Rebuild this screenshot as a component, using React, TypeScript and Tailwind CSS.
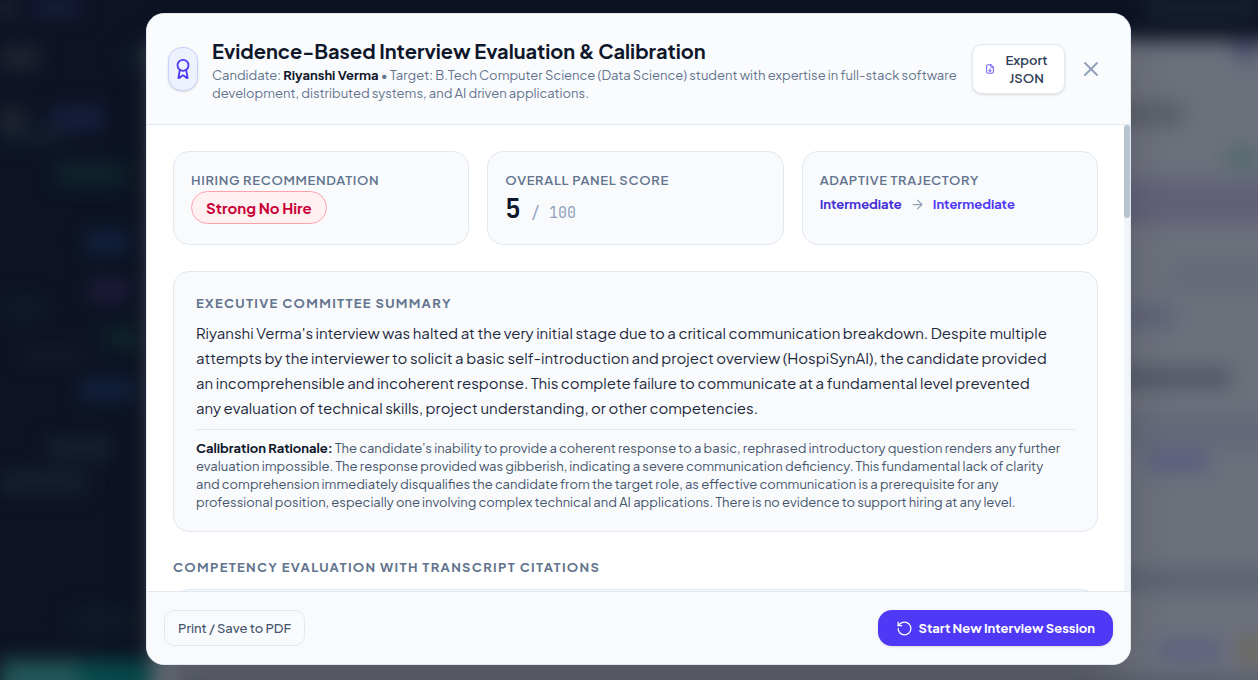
import React from 'react';
import { ArrowRight, Award, FileDown, RotateCcw, X } from 'lucide-react';

const StatCard: React.FC<{ label: string; children: React.ReactNode }> = ({ label, children }) => (
  <div className="min-h-[94px] rounded-2xl border border-slate-200 bg-slate-50 p-[17px]">
    <div className="text-[13px] font-semibold uppercase leading-[22px] tracking-wider text-slate-500">{label}</div>
    {children}
  </div>
);

// The page behind the dialog, seen through the blurred overlay
const Backdrop: React.FC = () => (
  <div aria-hidden="true" className="absolute inset-0 overflow-hidden bg-[#0d1323]">
    <div className="flex h-full flex-col blur-[10px]">
      <div className="flex h-10 shrink-0 justify-between">
        <div className="flex h-4 gap-5">
          <div className="w-3 bg-[#2c3140]" />
          <div className="w-12 bg-[#1a1f42]" />
        </div>
        <div className="h-4 w-28 bg-[#1b2435]" />
      </div>
      <div className="flex flex-1">
        <div className="flex w-[152px] shrink-0 flex-col">
          <div className="mt-2 flex h-5 justify-between">
            <div className="w-10 bg-[#232734]" />
            <div className="mr-2 w-5 bg-[#16202f]" />
          </div>
          <div className="mt-10 flex h-5">
            <div className="w-6 bg-[#262934]" />
            <div className="ml-7 w-[52px] bg-[#1a2044]" />
          </div>
          <div className="h-4 w-16 bg-[#141f2e]" />
          <div className="ml-14 mt-5 h-5 w-[72px] bg-[#0f272e]" />
          <div className="ml-[86px] mt-12 h-5 w-11 bg-[#122442]" />
          <div className="ml-[90px] mt-7 h-5 w-10 bg-[#221d3f]" />
          <div className="h-4 w-11 bg-[#131e2c]" />
          <div className="ml-[106px] mt-3 h-5 w-8 bg-[#0f2b2f]" />
          <div className="ml-5 h-3 w-16 bg-[#171c2e]" />
          <div className="ml-20 mt-5 h-5 w-14 bg-[#132442]" />
          <div className="ml-12 mt-10 h-4 w-16 bg-[#1b2533]" />
          <div className="mt-4 h-5 w-[86px] bg-[#182130]" />
          <div className="ml-[70px] mt-[120px] h-4 w-16 bg-[#131e2c]" />
          <div className="-mb-6 mt-auto flex h-11">
            <div className="w-20 bg-[#22575a]" />
            <div className="flex-1 bg-[#084a4d]" />
          </div>
        </div>
        <div className="-mb-6 -mr-6 flex flex-1 flex-col items-end bg-[#6c707b] pr-6">
          <div className="h-5 w-6 bg-[#4f5072]" />
          <div className="mr-[74px] mt-11 h-5 w-16 bg-[#575b65]" />
          <div className="mt-6 h-5 w-8 bg-[#4f696b]" />
          <div className="-mr-6 mt-3 h-11 w-44 bg-[#606079]" />
          <div className="-mr-6 mt-9 h-8 w-28 bg-[#646b77]" />
          <div className="mr-[84px] mt-4 h-4 w-14 bg-[#5a5d76]" />
          <div className="mr-7 mt-11 h-5 w-28 bg-[#515664]" />
          <div className="-mr-6 mt-7 h-8 w-44 bg-[#646879]" />
          <div className="mr-12 mt-1 h-5 w-16 bg-[#595d7f]" />
          <div className="-mr-6 mt-24 h-6 w-44 bg-[#5b6370]" />
          <div className="mt-12 flex h-5 gap-5">
            <div className="w-16 bg-[#5c6080]" />
            <div className="w-4 bg-[#6b6248]" />
          </div>
          <div className="-mr-6 mt-4 w-full flex-1 bg-[#565b68]" />
        </div>
      </div>
    </div>
  </div>
);

const App: React.FC = () => {
  return (
    <div className="relative h-screen overflow-hidden font-['Plus_Jakarta_Sans','Inter',sans-serif] antialiased">
      <Backdrop />

      <div className="relative flex h-full justify-center pb-[15px] pl-[19px] pt-[13px]">
        <div
          role="dialog"
          aria-modal="true"
          aria-labelledby="evaluation-title"
          className="flex w-full max-w-[985px] flex-col overflow-hidden rounded-[18px] border border-slate-200 bg-white shadow-2xl"
        >
          <header className="flex shrink-0 items-center border-b border-slate-200 bg-[#fafbfd] px-[21px] py-[22px]">
            <div className="flex h-11 w-[30px] shrink-0 items-center justify-center rounded-[14px] border border-indigo-200 bg-indigo-50 text-indigo-600 shadow-sm">
              <Award size={22} className="shrink-0" />
            </div>
            <div className="ml-[14px] min-w-0 flex-1">
              <h1 id="evaluation-title" className="text-[20px] font-bold leading-[30px] text-slate-900">
                Evidence-Based Interview Evaluation &amp; Calibration
              </h1>
              <p className="text-[13px] leading-[18px] text-slate-500">
                Candidate: <strong className="font-bold text-slate-900">Riyanshi Verma</strong> • Target: B.Tech
                Computer Science (Data Science) student with expertise in full-stack software development, distributed
                systems, and AI driven applications.
              </p>
            </div>
            <button className="flex w-[93px] shrink-0 items-center gap-[6px] rounded-[10px] border border-slate-200 bg-white px-3 py-[6px] text-[13px] font-semibold leading-[18px] text-slate-700 shadow-sm">
              <FileDown size={10} className="shrink-0 text-indigo-600" />
              <span className="flex-1 text-center">Export JSON</span>
            </button>
            <button aria-label="Close" className="ml-2 flex size-9 shrink-0 items-center justify-center text-slate-400">
              <X size={24} />
            </button>
          </header>

          <div className="flex min-h-0 flex-1">
            <div className="flex-1 overflow-y-auto p-[26px] [scrollbar-width:none]">
              <div className="grid grid-cols-3 gap-[18px]">
                <StatCard label="Hiring Recommendation">
                  <div className="w-fit rounded-full border border-rose-300 bg-rose-50 px-[14px] py-1 text-[15px] font-bold leading-[23px] text-rose-700">
                    Strong No Hire
                  </div>
                </StatCard>
                <StatCard label="Overall Panel Score">
                  <div className="flex items-baseline gap-[10px] font-['JetBrains_Mono','DejaVu_Sans_Mono',monospace] text-[26px] font-bold leading-9 text-slate-900">
                    5<span className="text-[15px] font-normal leading-5 text-slate-400">/ 100</span>
                  </div>
                </StatCard>
                <StatCard label="Adaptive Trajectory">
                  <div className="flex items-center gap-2 text-[13px] font-bold leading-[26px]">
                    <span className="text-indigo-700">Intermediate</span>
                    <ArrowRight size={15} className="text-slate-400" />
                    <span className="text-indigo-600">Intermediate</span>
                  </div>
                </StatCard>
              </div>

              <section className="mt-[26px] rounded-2xl border border-slate-200 bg-slate-50 px-[22px] pb-5 pt-[22px]">
                <h2 className="text-[13px] font-bold uppercase leading-[18px] tracking-widest text-slate-500">
                  Executive Committee Summary
                </h2>
                <p className="mt-2 pr-5 text-[15px] leading-[25px] text-slate-800">
                  Riyanshi Verma's interview was halted at the very initial stage due to a critical communication
                  breakdown. Despite multiple attempts by the interviewer to solicit a basic self-introduction and
                  project overview (HospiSynAI), the candidate provided an incomprehensible and incoherent response.
                  This complete failure to communicate at a fundamental level prevented any evaluation of technical
                  skills, project understanding, or other competencies.
                </p>
                <p className="mt-[9px] border-t border-slate-200 pr-3 pt-[9px] text-[13px] leading-[18px] text-slate-600">
                  <strong className="font-bold text-slate-900">Calibration Rationale:</strong> The candidate's
                  inability to provide a coherent response to a basic, rephrased introductory question renders any
                  further evaluation impossible. The response provided was gibberish, indicating a severe communication
                  deficiency. This fundamental lack of clarity and comprehension immediately disqualifies the candidate
                  from the target role, as effective communication is a prerequisite for any professional position,
                  especially one involving complex technical and AI applications. There is no evidence to support hiring
                  at any level.
                </p>
              </section>

              <h2 className="mt-[26px] text-[13px] font-bold uppercase leading-[18px] tracking-widest text-slate-500">
                Competency Evaluation with Transcript Citations
              </h2>
              <div className="mt-[13px] h-40 rounded-2xl border border-slate-200 bg-slate-50" />
            </div>
            <div className="w-1.5 shrink-0 bg-slate-100">
              <div className="h-1/5 rounded-full bg-[#b8c4d1]" />
            </div>
          </div>

          <footer className="flex shrink-0 items-center justify-between border-t border-slate-200 bg-slate-50 px-[17px] py-[18px]">
            <button className="rounded-[10px] border border-slate-200 px-[13px] py-2 text-[13px] font-medium leading-[18px] text-slate-600">
              Print / Save to PDF
            </button>
            <button className="flex items-center gap-[6px] rounded-[14px] bg-indigo-600 px-[18px] py-2 text-[13px] font-bold leading-5 text-white shadow-sm">
              <RotateCcw size={17} strokeWidth={1.75} />
              Start New Interview Session
            </button>
          </footer>
        </div>
      </div>
    </div>
  );
};

export default App;
